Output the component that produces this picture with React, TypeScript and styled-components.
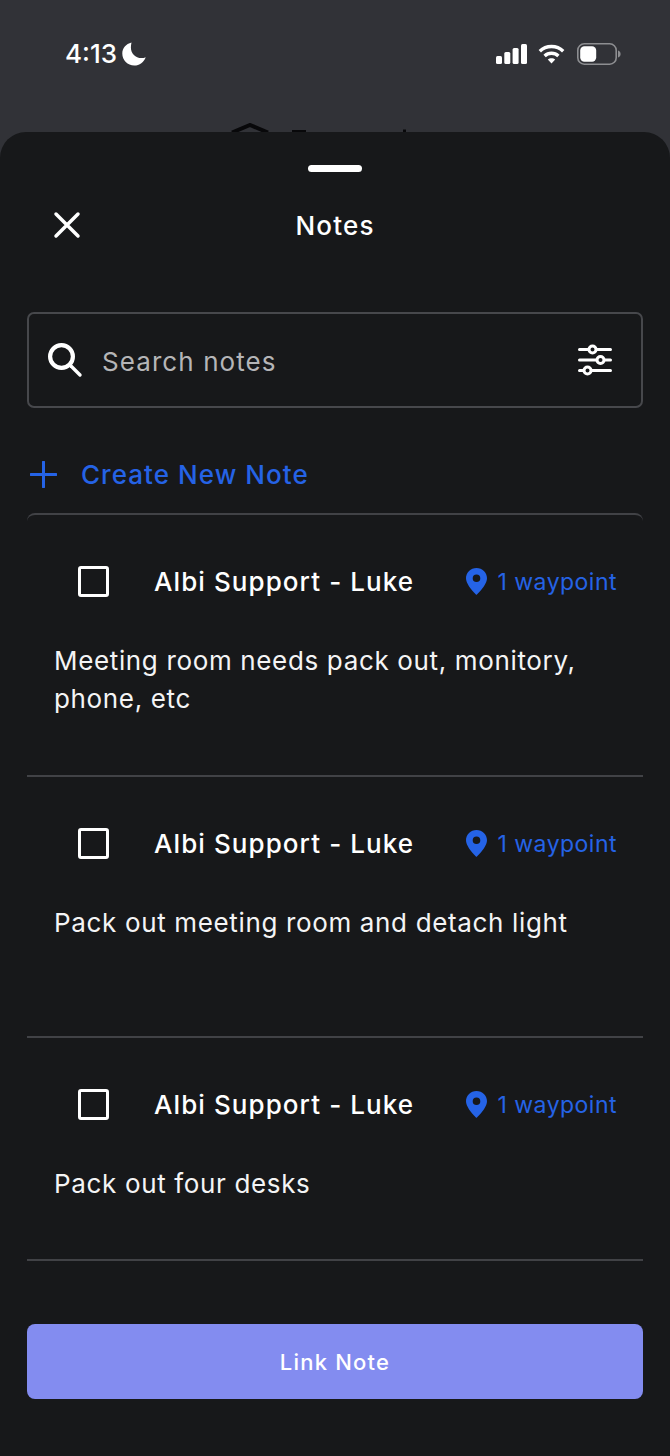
import styled, { createGlobalStyle } from 'styled-components'

const GlobalStyle = createGlobalStyle`
  html, body {
    margin: 0;
    padding: 0;
    background: #313237;
  }
  * {
    box-sizing: border-box;
  }
`

const Page = styled.div`
  width: 670px;
  height: 1456px;
  overflow: hidden;
  display: flex;
  flex-direction: column;
  font-family: Inter, 'Liberation Sans', sans-serif;
  background: #313237;
`

const StatusBar = styled.div`
  position: relative;
  height: 132px;
  flex: none;
  display: flex;
  justify-content: space-between;
  align-items: flex-start;
  padding: 37px 49px 0 65px;
  color: #fff;
`

const Clock = styled.div`
  display: flex;
  align-items: center;
  gap: 5px;
  font-size: 26px;
  line-height: 34px;
  font-weight: 500;
  letter-spacing: 0;
`

const StatusIcons = styled.div`
  display: flex;
  align-items: center;
  gap: 11px;
  height: 34px;
`

const BatteryIcon = styled.svg`
  margin-left: 1px;
`

const PeekMark = styled.svg`
  position: absolute;
  left: 228px;
  bottom: 0;
`

const Sheet = styled.div`
  flex: 1;
  display: flex;
  flex-direction: column;
  padding: 33px 27px 0;
  background: #17181a;
  border-radius: 26px 26px 0 0;
`

const Handle = styled.div`
  width: 54px;
  height: 7px;
  margin: 0 auto;
  background: #fff;
  border-radius: 4px;
`

const Header = styled.div`
  position: relative;
  display: flex;
  justify-content: center;
  align-items: center;
  height: 40px;
  margin-top: 33px;
`

const CloseButton = styled.div`
  position: absolute;
  left: 26px;
  top: 6px;
  display: flex;
`

const Title = styled.div`
  color: #fff;
  font-size: 26px;
  font-weight: 550;
  letter-spacing: 1.2px;
`

const SearchBox = styled.div`
  display: flex;
  align-items: center;
  height: 96px;
  margin-top: 67px;
  padding: 0 29px 0 18px;
  border: 2px solid #47484c;
  border-radius: 7px;
`

const SearchLabel = styled.div`
  flex: 1;
  margin-left: 19px;
  padding-top: 2px;
  color: #b5b5b7;
  font-size: 26px;
  letter-spacing: 1.08px;
`

const CreateRow = styled.div`
  display: flex;
  align-items: center;
  gap: 24px;
  height: 40px;
  margin-top: 46px;
  padding-left: 3px;
  color: #2563e6;
  font-size: 26px;
  font-weight: 500;
  letter-spacing: 1.05px;
`

const NoteList = styled.div`
  margin-top: 19px;
  border-top: 2px solid #414246;
  border-radius: 8px 8px 0 0;
`

const NoteRow = styled.div`
  padding: 46px 27px 56px;
  border-bottom: 2px solid #414246;

  &:first-child {
    padding-bottom: 57px;
  }
`

const NoteHead = styled.div`
  display: flex;
  align-items: center;
  height: 40px;
`

const Checkbox = styled.div`
  width: 31px;
  height: 31px;
  margin-left: 24px;
  border: 3.5px solid #fff;
  border-radius: 3px;
  flex: none;
`

const NoteTitle = styled.div`
  flex: 1;
  margin-left: 45px;
  color: #fff;
  font-size: 26px;
  font-weight: 550;
  letter-spacing: 1.08px;
  white-space: nowrap;
`

const Waypoint = styled.div`
  display: flex;
  align-items: center;
  gap: 10px;
  margin-right: -1px;
  color: #2563e6;
  font-size: 23px;
  line-height: 30px;
  letter-spacing: 0.48px;
  white-space: nowrap;
`

const WaypointLabel = styled.span`
  padding-top: 2px;
`

const NoteBody = styled.div<{ $lines: number }>`
  min-height: ${(props) => props.$lines * 38}px;
  margin-top: 41px;
  color: #f4f4f5;
  font-size: 26px;
  line-height: 38px;
  letter-spacing: 0.65px;
`

const LinkButton = styled.div`
  display: flex;
  align-items: center;
  justify-content: center;
  height: 75px;
  margin-top: 63px;
  background: #838cf0;
  border-radius: 8px;
  color: #fff;
  font-size: 22px;
  font-weight: 500;
  letter-spacing: 1.2px;
`

const notes = [
  { id: 1, text: 'Meeting room needs pack out, monitory, phone, etc', lines: 2 },
  { id: 2, text: 'Pack out meeting room and detach light', lines: 2 },
  { id: 3, text: 'Pack out four desks', lines: 1 },
]

function Moon() {
  return (
    <svg width="25" height="24" viewBox="0 0 25 24">
      <path d="M9.500 0.500C4 1.800 0.300 6.200 0.300 11.600c0 6.600 5.300 11.900 11.900 11.900 5.300 0 9.900-3.400 11.500-8.300-1.300.6-2.700.9-4.200.9-6.100 0-10.600-4.700-10.600-10.600 0-1.800.2-3.400.6-5z" fill="#fff" />
    </svg>
  )
}

function Signal() {
  return (
    <svg width="31" height="20" viewBox="0 0 31 20">
      <rect x="0" y="12" width="6" height="8" rx="1.500" fill="#fff" />
      <rect x="8.300" y="8" width="6" height="12" rx="1.500" fill="#fff" />
      <rect x="16.600" y="4" width="6" height="16" rx="1.500" fill="#fff" />
      <rect x="25" y="0" width="6" height="20" rx="1.500" fill="#fff" />
    </svg>
  )
}

function Wifi() {
  return (
    <svg width="27" height="20" viewBox="0 0 27 20" fill="none" stroke="#fff" strokeWidth="3.400">
      <path d="M1.800 7.200C8.200 1 18.800 1 25.200 7.200" />
      <path d="M6.600 12C10.400 8.400 16.600 8.400 20.400 12" />
      <path d="M13.500 19.400l-3.700-3.800c2-1.900 5.400-1.900 7.400 0z" fill="#fff" stroke="none" />
    </svg>
  )
}

function Battery() {
  return (
    <BatteryIcon width="44" height="22" viewBox="0 0 44 22">
      <rect x="0.800" y="0.800" width="38.400" height="20.400" rx="6.500" fill="none" stroke="#8d8e91" strokeWidth="1.600" />
      <rect x="3.200" y="3.200" width="16" height="15.600" rx="4.200" fill="#fff" />
      <path d="M41 7.500c1.600.5 2.600 1.900 2.600 3.500s-1 3-2.600 3.500z" fill="#8d8e91" />
    </BatteryIcon>
  )
}

function CloseIcon() {
  return (
    <svg width="28" height="28" viewBox="0 0 28 28" fill="none" stroke="#fff" strokeWidth="3.500" strokeLinecap="round">
      <path d="M3 3l22 22M25 3L3 25" />
    </svg>
  )
}

function SearchIcon() {
  return (
    <svg width="36" height="36" viewBox="0 0 36 36" fill="none" stroke="#fff" strokeLinecap="round">
      <circle cx="14.500" cy="14.500" r="11.400" strokeWidth="4.200" />
      <path d="M24 24l9 9" strokeWidth="3.400" />
    </svg>
  )
}

function SlidersIcon() {
  return (
    <svg width="34" height="32" viewBox="0 0 34 32" fill="none" stroke="#fff" strokeWidth="3" strokeLinecap="round">
      <path d="M1.500 5.500h9M18.500 5.500h14M1.500 16h17M26.500 16h6M1.500 26.500h4M13.500 26.500h19" />
      <circle cx="14.500" cy="5.500" r="3.500" />
      <circle cx="22.500" cy="16" r="3.500" />
      <circle cx="9.500" cy="26.500" r="3.500" />
    </svg>
  )
}

function PlusIcon() {
  return (
    <svg width="27" height="27" viewBox="0 0 27 27" stroke="#2563e6" strokeWidth="3" strokeLinecap="round">
      <path d="M13.500 1v25M1 13.500h25" />
    </svg>
  )
}

function PinIcon() {
  return (
    <svg width="21" height="27" viewBox="0 0 21 27">
      <path
        fillRule="evenodd"
        d="M10.500 0C4.700 0 0 4.600 0 10.300 0 17.400 10.500 27 10.500 27S21 17.400 21 10.300C21 4.600 16.300 0 10.500 0zm0 14a3.800 3.800 0 1 1 0-7.600 3.800 3.800 0 0 1 0 7.600z"
        fill="#2563e6"
      />
    </svg>
  )
}

function App() {
  return (
    <Page>
      <GlobalStyle />
      <StatusBar>
        <Clock>
          4:13
          <Moon />
        </Clock>
        <StatusIcons>
          <Signal />
          <Wifi />
          <Battery />
        </StatusIcons>
        <PeekMark width="180" height="9" viewBox="0 0 180 9">
          <path d="M4 9.500L22 2 40 9.500" fill="none" stroke="#08080a" strokeWidth="4" />
          <rect x="64" y="7" width="14" height="2" fill="#08080a" />
          <rect x="175" y="6.500" width="3" height="2.500" fill="#08080a" />
        </PeekMark>
      </StatusBar>
      <Sheet>
        <Handle />
        <Header>
          <CloseButton>
            <CloseIcon />
          </CloseButton>
          <Title>Notes</Title>
        </Header>
        <SearchBox>
          <SearchIcon />
          <SearchLabel>Search notes</SearchLabel>
          <SlidersIcon />
        </SearchBox>
        <CreateRow>
          <PlusIcon />
          Create New Note
        </CreateRow>
        <NoteList>
          {notes.map((note) => (
            <NoteRow key={note.id}>
              <NoteHead>
                <Checkbox />
                <NoteTitle>Albi Support - Luke</NoteTitle>
                <Waypoint>
                  <PinIcon />
                  <WaypointLabel>1 waypoint</WaypointLabel>
                </Waypoint>
              </NoteHead>
              <NoteBody $lines={note.lines}>{note.text}</NoteBody>
            </NoteRow>
          ))}
        </NoteList>
        <LinkButton>Link Note</LinkButton>
      </Sheet>
    </Page>
  )
}

export default App
